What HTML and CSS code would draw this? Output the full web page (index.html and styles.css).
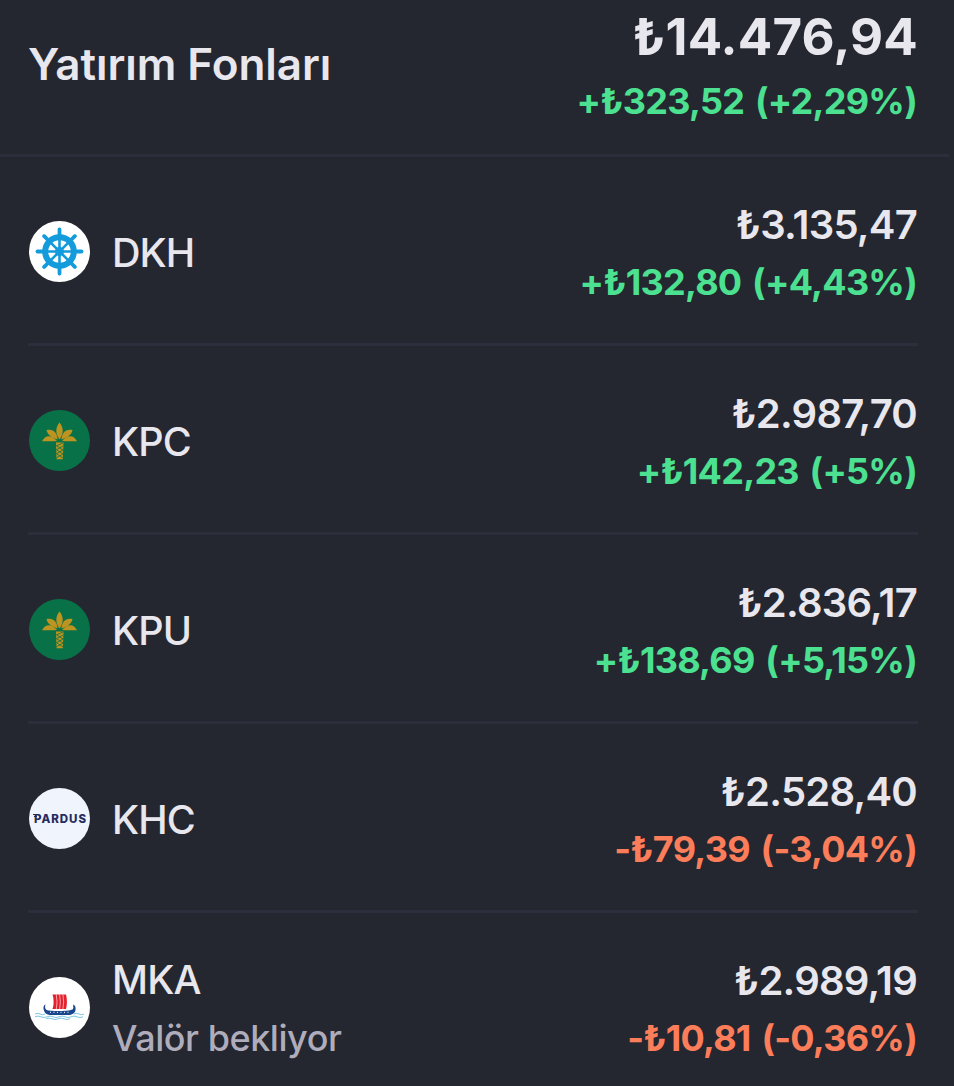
FILE: index.html
```
<!DOCTYPE html>
<html lang="tr">
<head>
<meta charset="utf-8">
<title>Yatırım Fonları</title>
<link rel="stylesheet" href="styles.css">
</head>
<body>
<svg class="defs" width="0" height="0" aria-hidden="true">
  <defs>
    <g id="palm">
      <circle cx="30.5" cy="30.5" r="30.5" fill="#087147"/>
      <g fill="#bd9420">
        <path d="M30.500 12.500C35 18 34.500 24 30.500 29.500C26.500 24 26 18 30.500 12.500Z"/>
        <path d="M28.600 29.500C28 22 24 18.500 17.500 20C18.500 25 23 28 28.600 29.500Z"/>
        <path d="M32.400 29.500C33 22 37 18.500 43.500 20C42.500 25 38 28 32.400 29.500Z"/>
        <path d="M28 31C23 24.500 16 24.500 13 31.300C18 31 23 31.300 28 31Z"/>
        <path d="M33 31C38 24.500 45 24.500 48 31.300C43 31 38 31.300 33 31Z"/>
        <path d="M27 32.500H34.500L33.800 49.300H27.500Z"/>
      </g>
      <path d="M27 36L34 33M27 40L34 36M28 36L34 40M27 44L34 40M28 40L34 44M27 48L34 44M28 44L34 48" stroke="#087147" stroke-width=".8"/>
    </g>
  </defs>
</svg>
<main class="portfolio">
  <header class="summary">
    <h1 class="title">Yatırım Fonları</h1>
    <div class="amounts">
      <div class="total">₺14.476,94</div>
      <div class="change up">+₺323,52 (+2,29%)</div>
    </div>
  </header>
  <ul class="funds">
    <li class="fund">
      <svg class="logo" viewBox="0 0 61 61">
        <circle cx="30.500" cy="30.500" r="30.500" fill="#fff"/>
        <g stroke="#149bdc" fill="none" stroke-linecap="round">
          <circle cx="30.500" cy="30.500" r="14.300" stroke-width="6"/>
          <path stroke-width="2.600" d="M30.500 8V53M8 30.500H53M14.900 14.900L46.100 46.100M46.100 14.900L14.900 46.100"/>
          <path stroke-width="3.800" d="M30.500 8.500V14M30.500 47V52.500M8.500 30.500H14M47 30.500H52.500M15.200 15.200L19 19M42 42L45.800 45.800M45.800 15.200L42 19M19 42L15.200 45.800"/>
        </g>
        <circle cx="30.500" cy="30.500" r="4.500" fill="#149bdc"/>
      </svg>
      <div class="info"><div class="name">DKH</div></div>
      <div class="amounts"><div class="value">₺3.135,47</div><div class="change up">+₺132,80 (+4,43%)</div></div>
    </li>
    <li class="fund">
      <svg class="logo" viewBox="0 0 61 61"><use href="#palm"/></svg>
      <div class="info"><div class="name">KPC</div></div>
      <div class="amounts"><div class="value">₺2.987,70</div><div class="change up">+₺142,23 (+5%)</div></div>
    </li>
    <li class="fund">
      <svg class="logo" viewBox="0 0 61 61"><use href="#palm"/></svg>
      <div class="info"><div class="name">KPU</div></div>
      <div class="amounts"><div class="value">₺2.836,17</div><div class="change up">+₺138,69 (+5,15%)</div></div>
    </li>
    <li class="fund">
      <svg class="logo" viewBox="0 0 61 61">
        <circle cx="30.500" cy="30.500" r="30.500" fill="#f0f4fd"/>
        <text class="brand" x="5" y="34.500" textLength="52">PARDUS</text>
        <path d="M4 26.500H9M5 28.500H8" stroke="#252c60" stroke-width="1"/>
      </svg>
      <div class="info"><div class="name">KHC</div></div>
      <div class="amounts"><div class="value">₺2.528,40</div><div class="change down">-₺79,39 (-3,04%)</div></div>
    </li>
    <li class="fund">
      <svg class="logo" viewBox="0 0 61 61">
        <circle cx="30.500" cy="30.500" r="30.500" fill="#fff"/>
        <path d="M23.500 17.500H37C38.200 22 38.200 28 37 32H23.500C25 28 25 22 23.500 17.500Z" fill="#e3202c"/>
        <path d="M27.300 17.500Q28.800 25 27.300 32M30.600 17.500Q32.100 25 30.600 32M33.900 17.500Q35.400 25 33.900 32" stroke="#fff" stroke-width=".6" fill="none"/>
        <path d="M16.500 27.500C14.500 28 14 31 15 33.500C16 37 19 38 22 38H39C43 38 46 36.500 46.500 33C47 30 46 28 44 27.500C44.500 30 44.500 31.500 43.500 32.500C39 34.500 22 34.500 17.500 33C15.800 31.500 15.800 29.500 16.500 27.500Z" fill="#1b468c"/>
        <path d="M21 35.300H41" stroke="#fff" stroke-width="1" stroke-dasharray="1 2.500"/>
        <path d="M6 37q2.500-1.500 5 0t5 0M45 37q2.500-1.500 5 0t5 0M6 39.800q3-1.500 6 0t6 0t6 0t6 0t6 0t6 0t6 0t6 0M17 41.800q3-1.500 6 0t6 0t6 0t6 0" stroke="#5eb7dc" stroke-width=".8" fill="none"/>
      </svg>
      <div class="info"><div class="name">MKA</div><div class="note">Valör bekliyor</div></div>
      <div class="amounts"><div class="value">₺2.989,19</div><div class="change down">-₺10,81 (-0,36%)</div></div>
    </li>
  </ul>
</main>
</body>
</html>
```
FILE: styles.css
```
* { box-sizing: border-box; }
body {
  margin: 0;
  background: #242630;
  color: #e8e7ee;
  font-family: Inter, "Liberation Sans", sans-serif;
}
.defs { display: block; }
.portfolio { height: 1086px; overflow: hidden; }
.summary {
  display: flex;
  justify-content: space-between;
  width: 949px;
  height: 157px;
  padding: 8px 32px 0 28px;
  border-bottom: 3px solid #2c2e3b;
}
.title {
  margin: 28px 0 0;
  font-size: 44px;
  line-height: 56px;
  font-weight: 600;
  letter-spacing: -0.06px;
}
.amounts { text-align: right; white-space: nowrap; }
.total {
  font-size: 51px;
  line-height: 57px;
  font-weight: 700;
  letter-spacing: 0.2px;
  margin-right: -1px;
}
.change {
  font-size: 36px;
  line-height: 56px;
  font-weight: 700;
  letter-spacing: -0.75px;
  word-spacing: 3px;
}
.summary .change { line-height: 72px; }
.up { color: #4ce191; }
.down { color: #fb7d5a; }
.funds {
  margin: 0;
  padding: 0 36px 0 28px;
  list-style: none;
}
.fund {
  display: flex;
  align-items: center;
  height: 189px;
  padding-top: 3px;
  border-bottom: 3px solid #2c2e3b;
}
.fund .amounts { margin-left: auto; padding: 2px 1px 0 0; }
.fund:last-child { border-bottom-color: transparent; }
.logo { width: 61px; height: 61px; margin: 0 23px 0 1px; flex: none; }
.info { padding-top: 2px; }
.name {
  font-size: 39.5px;
  line-height: 58px;
  font-weight: 500;
  letter-spacing: -0.9px;
  margin-left: -1px;
}
.note {
  color: #afadbb;
  font-size: 36px;
  line-height: 58px;
  font-weight: 450;
  letter-spacing: -0.45px;
  margin-left: -1px;
}
.value {
  font-size: 40px;
  line-height: 58px;
  font-weight: 600;
  letter-spacing: -0.75px;
}
.brand { font: 800 11.5px Inter, sans-serif; fill: #252c60; }
```
